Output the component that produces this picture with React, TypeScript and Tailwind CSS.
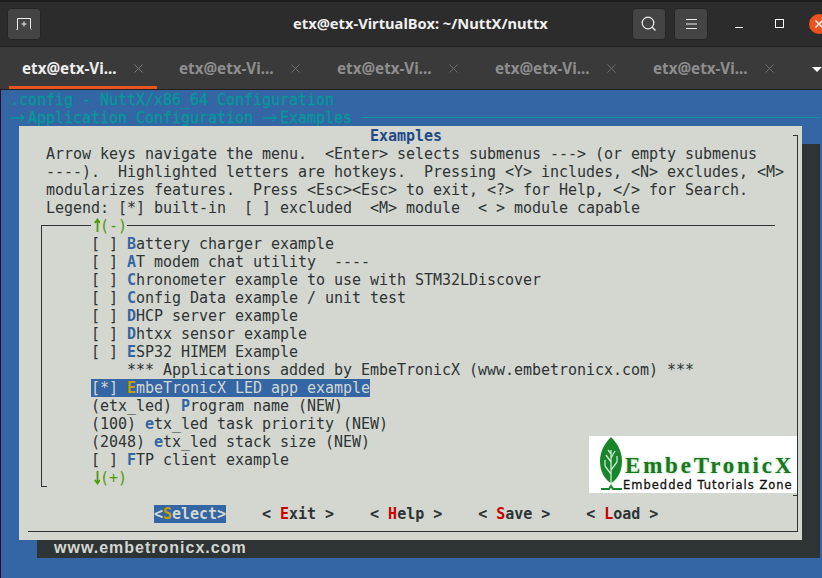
import type { ReactNode } from "react";

const mono = "h-[18px] leading-[18px] whitespace-pre";

const helpLines = [
  "Arrow keys navigate the menu.  <Enter> selects submenus ---> (or empty submenus",
  "----).  Highlighted letters are hotkeys.  Pressing <Y> includes, <N> excludes, <M>",
  "modularizes features.  Press <Esc><Esc> to exit, <?> for Help, </> for Search.",
  "Legend: [*] built-in  [ ] excluded  <M> module  < > module capable",
];

// before / hotkey / after, same split menuconfig draws
const items: [string, string, string][] = [
  ["[ ] ", "B", "attery charger example"],
  ["[ ] ", "A", "T modem chat utility  ----"],
  ["[ ] ", "C", "hronometer example to use with STM32LDiscover"],
  ["[ ] ", "C", "onfig Data example / unit test"],
  ["[ ] ", "D", "HCP server example"],
  ["[ ] ", "D", "htxx sensor example"],
  ["[ ] ", "E", "SP32 HIMEM Example"],
  ["    *** Applications added by EmbeTronicX (www.embetronicx.com) ***", "", ""],
];

const itemsAfter: [string, string, string][] = [
  ["(etx_led) ", "P", "rogram name (NEW)"],
  ["(100) ", "e", "tx_led task priority (NEW)"],
  ["(2048) ", "e", "tx_led stack size (NEW)"],
  ["[ ] ", "F", "TP client example"],
];

function MenuRow({ item }: { item: [string, string, string] }) {
  return (
    <div className={mono}>
      {item[0]}
      <span className="font-bold text-[#3465a4]">{item[1]}</span>
      {item[2]}
    </div>
  );
}

function NavButton({ children }: { children: ReactNode }) {
  return (
    <div className="flex h-8 w-[34px] shrink-0 items-center justify-center rounded-[4px] border border-[#262626] bg-[#444444]">
      {children}
    </div>
  );
}

function Tab({ active }: { active?: boolean }) {
  return (
    <div
      className={
        active
          ? "ml-[9px] flex h-[42px] w-[148px] shrink-0 items-center border-b-[3px] border-[#e95420] pl-[13px] pt-[3px] text-[#eeeeee]"
          : "ml-[1px] flex h-[42px] w-[157px] shrink-0 items-center pl-[21px] text-[#8e8e8e]"
      }
    >
      <span className="w-[112px] whitespace-nowrap text-[15.2px] font-bold">etx@etx-Vi...</span>
      <svg width="9" height="9" viewBox="0 0 9 9" className="shrink-0" stroke={active ? "#7d7d7d" : "#6f6f6f"} strokeWidth="1">
        <path d="M0.5 0.5L8.5 8.5M8.5 0.5L0.5 8.5" />
      </svg>
    </div>
  );
}

function PathArrow() {
  return (
    <svg width="18" height="18" viewBox="0 0 18 18" fill="none" stroke="#06989a" strokeWidth="1.3" className="shrink-0">
      <path d="M1 9H14M10.5 5.5L14 9L10.5 12.5" />
    </svg>
  );
}

function Logo() {
  return (
    <div className="absolute left-[570px] top-[310px] flex h-[57px] w-[208px] bg-white">
      <svg width="24" height="57" viewBox="0 0 24 57" className="ml-[10px] shrink-0">
        <path d="M12 1C8 5 1 13 1 25C1 36 6 44 12 47C18 44 23 36 23 25C23 13 16 5 12 1Z" fill="#17852c" />
        <path
          d="M12 52V14M12 38L6 30M6 30V24M12 34L18 26M18 26V20M12 26L7 19M12 22L16 15M9 14L12 18"
          stroke="#cfe8d0"
          strokeWidth="1.3"
          fill="none"
        />
        <path d="M2 53H10L12 50L14 53H23" stroke="#17852c" strokeWidth="2" fill="none" />
      </svg>
      <div className="flex flex-col">
        <div className="ml-[2px] mt-[18px] h-[24px] text-[23px] font-bold leading-[24px] tracking-[2.8px] text-[#18761e] [font-family:'Liberation_Serif',serif] [text-shadow:0_0_3px_#9fd09f]">
          EmbeTronicX
        </div>
        <div className="mt-px whitespace-nowrap text-[11.5px] leading-[13px] tracking-[1px] text-[#111111] [-webkit-text-stroke:0.3px_#111111] [font-family:'DejaVu_Sans',sans-serif]">
          Embedded Tutorials Zone
        </div>
      </div>
    </div>
  );
}

export default function App() {
  return (
    <div className="flex h-[578px] w-[822px] flex-col overflow-hidden bg-[#3465a4] [font-family:'Noto_Sans',sans-serif]">
      {/* Title bar */}
      <div className="flex h-[47px] shrink-0 items-center overflow-hidden border-t-2 border-b border-t-[#1d1d1d] border-b-[#232323] bg-[#2c2c2c] pb-[1px]">
        <div className="ml-[7px]">
          <NavButton>
            <svg width="16" height="13" viewBox="0 0 16 13" fill="none" stroke="#eeeeee" strokeWidth="1">
              <path d="M0.5 12.5H1.5V1.5H14.5V11.5L15.5 12.5" />
              <path d="M8 4.5V9.5M5.5 7H10.5" />
            </svg>
          </NavButton>
        </div>
        <div className="ml-[252px] w-[339px] shrink-0 whitespace-nowrap text-[14.7px] font-bold text-[#f0f0f0]">
          etx@etx-VirtualBox: ~/NuttX/nuttx
        </div>
        <NavButton>
          <svg width="16" height="16" viewBox="0 0 16 16" fill="none" stroke="#eeeeee" strokeWidth="1.2">
            <circle cx="7" cy="7" r="5.8" />
            <path d="M11 11L14.5 14.5" />
          </svg>
        </NavButton>
        <div className="ml-2">
          <NavButton>
            <svg width="11" height="10" viewBox="0 0 11 10" stroke="#eeeeee" strokeWidth="1">
              <path d="M0 0.5H11M0 5H11M0 9.5H11" />
            </svg>
          </NavButton>
        </div>
        <div className="ml-[27px] mt-[7px] h-px w-2 shrink-0 bg-white" />
        <div className="ml-[32px] h-[9px] w-[9px] shrink-0 border border-white" />
        <div className="ml-[25px] flex h-5 w-5 shrink-0 items-center justify-center rounded-full bg-[#e95420]">
          <svg width="8" height="8" viewBox="0 0 8 8" stroke="#ffffff" strokeWidth="1.3">
            <path d="M0.5 0.5L7.5 7.5M7.5 0.5L0.5 7.5" />
          </svg>
        </div>
      </div>

      {/* Tabs */}
      <div className="relative flex h-[43px] shrink-0 overflow-hidden border-b border-[#1f1f1f] bg-[#3a3a3a]">
        <Tab active />
        <Tab />
        <Tab />
        <Tab />
        <Tab />
        <div className="absolute right-0 top-[20px] h-0 w-0 border-x-[5px] border-t-[5px] border-x-transparent border-t-white" />
      </div>

      {/* Terminal */}
      <div className="flex-1 border-l border-[#300a24] bg-[#3465a4] pt-px text-[15px] tracking-[-0.03px] text-[#2e3436] [font-family:'DejaVu_Sans_Mono',monospace]">
        <div className={`${mono} pl-[9px] text-[#06989a] [-webkit-text-stroke:0.35px_#06989a]`}>
          .config - NuttX/x86_64 Configuration
        </div>
        <div className={`${mono} flex pl-[9px] pr-[2px] text-[#06989a] [-webkit-text-stroke:0.35px_#06989a]`}>
          <PathArrow />
          <span className="w-[234px] shrink-0">Application Configuration</span>
          <PathArrow />
          <span className="w-[81px] shrink-0">Examples</span>
          <div className="mt-2 h-px flex-1 bg-[#06989a]" />
        </div>

        {/* Dialog with its drop shadow */}
        <div className="relative z-10 ml-[18px] mt-[-1px] h-[414px] w-[783px]">
          <div className="absolute left-[18px] top-[18px] flex h-[414px] w-[783px] items-end bg-[#2e3436]">
            <div className="h-[18px] pl-[17px] text-[16px] font-bold leading-[15px] tracking-[1px] text-[#d3d7cf] [font-family:'Liberation_Sans',sans-serif]">
              www.embetronicx.com
            </div>
          </div>

          <div className="relative h-[414px] bg-[#d3d7cf] pt-px">
            {/* dark side of the ncurses frame, the light side blends in */}
            <div className="absolute bottom-[8px] left-[9px] right-[4px] top-[9px] border-b border-r border-[#2e3436]">
              <div className="absolute right-0 top-0 h-px w-1 bg-[#2e3436]" />
              <div className="absolute right-0 top-[360px] h-px w-1 bg-[#2e3436]" />
            </div>

            <div className={`${mono} relative pl-[351px] font-bold text-[#204a87]`}>Examples</div>
            <div className="relative pl-[27px]">
              {helpLines.map((line) => (
                <div key={line} className={mono}>
                  {line}
                </div>
              ))}
            </div>

            {/* Menu list */}
            <div className="relative ml-[22px] mt-2 w-[734px] border-l border-t border-[#2e3436] pl-[49px]">
              <div className={`${mono} mt-[-9px] flex w-[36px] bg-[#d3d7cf] text-[#4e9a06]`}>
                <svg width="9" height="18" viewBox="0 0 9 18" fill="none" stroke="#4e9a06" strokeWidth="1.8" className="shrink-0">
                  <path d="M6.5 2.5V15M3.8 6L6.5 2.5L9 6" />
                </svg>
                (-)
              </div>
              {items.map((item) => (
                <MenuRow key={item[0] + item[2]} item={item} />
              ))}
              <div className={`${mono} w-fit bg-[#3465a4] text-[#d3d7cf]`}>
                [*] <span className="font-bold text-[#c4a000]">E</span>mbeTronicX LED app example
              </div>
              {itemsAfter.map((item) => (
                <MenuRow key={item[0] + item[2]} item={item} />
              ))}
              <div className={`${mono} relative mb-[-9px] flex text-[#4e9a06]`}>
                <svg width="9" height="18" viewBox="0 0 9 18" fill="none" stroke="#4e9a06" strokeWidth="1.8" className="shrink-0">
                  <path d="M6.5 2V14.5M3.8 11L6.5 14.5L9 11" />
                </svg>
                (+)
              </div>
              <div className="absolute bottom-0 left-0 h-px w-[5px] bg-[#2e3436]" />
            </div>

            {/* Buttons */}
            <div className={`${mono} relative mt-[27px] flex pl-[135px] font-bold`}>
              <span className="bg-[#3465a4] text-[#d3d7cf]">
                {"<"}
                <span className="text-[#c4a000]">S</span>
                {"elect>"}
              </span>
              <span className="ml-[36px]">
                {"< "}
                <span className="text-[#cc0000]">E</span>
                {"xit >"}
              </span>
              <span className="ml-[36px]">
                {"< "}
                <span className="text-[#cc0000]">H</span>
                {"elp >"}
              </span>
              <span className="ml-[36px]">
                {"< "}
                <span className="text-[#cc0000]">S</span>
                {"ave >"}
              </span>
              <span className="ml-[36px]">
                {"< "}
                <span className="text-[#cc0000]">L</span>
                {"oad >"}
              </span>
            </div>

            <Logo />
          </div>
        </div>
      </div>
    </div>
  );
}
